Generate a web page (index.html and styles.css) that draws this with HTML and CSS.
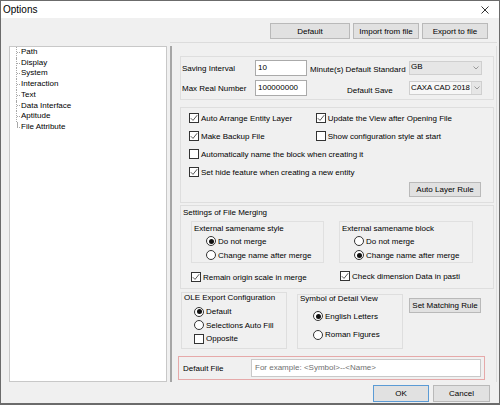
FILE: index.html
```html
<!DOCTYPE html>
<html lang="en">
<head>
    <meta charset="UTF-8">
    <title>Options</title>
    <link rel="stylesheet" href="styles.css">
</head>
<body>

    <div class="window">
        <div class="titlebar">
            <span class="title">Options</span>
            <svg class="close" width="8" height="8" viewBox="0 0 8 8">
                <path d="M0.5 0.5 L7.5 7.5 M7.5 0.5 L0.5 7.5" stroke="#333" stroke-width="1" fill="none"/>
            </svg>
        </div>

        <div class="content">
            <div class="toolbar">
                <button class="btn btn-default">Default</button>
                <button class="btn btn-import">Import from file</button>
                <button class="btn btn-export">Export to file</button>
            </div>
            <div class="separator"></div>

            <div class="main">
                <ul class="tree">
                    <li>Path</li>
                    <li>Display</li>
                    <li>System</li>
                    <li>Interaction</li>
                    <li>Text</li>
                    <li>Data Interface</li>
                    <li>Aptitude</li>
                    <li class="last">File Attribute</li>
                </ul>

                <div class="page">
                    <!-- basic values -->
                    <div class="group basic">
                        <span class="lbl">Saving Interval</span>
                        <span class="field">10</span>
                        <span class="mid mid-1">Minute(s) Default Standard</span>
                        <span class="select select-gb"><span class="sel-text">GB</span><span class="chev"></span></span>

                        <span class="lbl">Max Real Number</span>
                        <span class="field">100000000</span>
                        <span class="mid mid-2">Default Save</span>
                        <span class="select select-save"><span class="sel-text">CAXA CAD 2018</span><span class="chev"></span></span>
                    </div>

                    <!-- checkbox options -->
                    <div class="group checks">
                        <div class="check-grid">
                            <label class="opt"><span class="cb on"></span>Auto Arrange Entity Layer</label>
                            <label class="opt"><span class="cb on"></span>Update the View after Opening File</label>
                            <label class="opt"><span class="cb on"></span>Make Backup File</label>
                            <label class="opt"><span class="cb"></span>Show configuration style at start</label>
                            <label class="opt wide"><span class="cb"></span>Automatically name the block when creating it</label>
                            <label class="opt wide"><span class="cb on"></span>Set hide feature when creating a new entity</label>
                        </div>
                        <div class="btn-row">
                            <button class="btn btn-small">Auto Layer Rule</button>
                        </div>
                    </div>

                    <!-- file merging -->
                    <div class="group merge">
                        <div class="group-title">Settings of File Merging</div>
                        <div class="sub-row">
                            <div class="subbox">
                                <div class="sub-title">External samename style</div>
                                <label class="opt radio-opt"><span class="rb on"></span>Do not merge</label>
                                <label class="opt radio-opt"><span class="rb"></span>Change name after merge</label>
                            </div>
                            <div class="subbox subbox-2">
                                <div class="sub-title">External samename block</div>
                                <label class="opt radio-opt"><span class="rb"></span>Do not merge</label>
                                <label class="opt radio-opt"><span class="rb on"></span>Change name after merge</label>
                            </div>
                        </div>
                        <div class="merge-checks">
                            <label class="opt merge-left"><span class="cb on"></span>Remain origin scale in merge</label>
                            <label class="opt merge-right"><span class="cb on"></span>Check dimension Data in pasti</label>
                        </div>
                    </div>

                    <!-- export / detail view -->
                    <div class="lower">
                        <div class="box ole">
                            <div class="box-title">OLE Export Configuration</div>
                            <label class="opt ole-opt"><span class="rb on"></span>Default</label>
                            <label class="opt ole-opt"><span class="rb"></span>Selections Auto Fill</label>
                            <label class="opt ole-opt"><span class="cb"></span>Opposite</label>
                        </div>
                        <div class="box symbol">
                            <div class="box-title">Symbol of Detail View</div>
                            <label class="opt sym-opt"><span class="rb on"></span>English Letters</label>
                            <label class="opt sym-opt"><span class="rb"></span>Roman Figures</label>
                        </div>
                        <button class="btn btn-small btn-match">Set Matching Rule</button>
                    </div>

                    <div class="default-file">
                        <span class="df-label">Default File</span>
                        <span class="df-input">For example: &lt;Symbol&gt;--&lt;Name&gt;</span>
                    </div>
                </div>
            </div>

            <div class="footer">
                <button class="btn btn-ok">OK</button>
                <button class="btn btn-cancel">Cancel</button>
            </div>
        </div>
    </div>

</body>
</html>
```

FILE: styles.css
```css
* {
    box-sizing: border-box;
}

body {
    margin: 0;
    font-family: "Liberation Sans", Arial, sans-serif;
    font-size: 8px;
    color: #000;
    background: #fff;
}

.window {
    width: 500px;
    height: 405px;
    border: 1px solid #6b6b6b;
    border-bottom-width: 2px;
    background: #f0f0f0;
    display: flex;
    flex-direction: column;
}

.titlebar {
    height: 17px;
    flex: none;
    background: #fff;
    display: flex;
    align-items: center;
    justify-content: space-between;
    padding: 0 10px 0 2px;
}

.title {
    font-size: 10px;
}

.content {
    flex: 1;
    display: flex;
    flex-direction: column;
    padding: 5px 2px 0 8px;
}

/* buttons */
.btn {
    font-family: inherit;
    font-size: 8px;
    color: #000;
    background: #e1e1e1;
    border: 1px solid #b9b9b9;
    padding: 0;
    margin: 0;
    border-radius: 0;
}

.toolbar {
    display: flex;
    justify-content: flex-end;
    gap: 3px;
    height: 16px;
    padding-right: 9px;
}

.btn-default {
    width: 80px;
}

.btn-import,
.btn-export {
    width: 66px;
}

.separator {
    height: 1px;
    margin: 3px 0 0 161px;
    background: #dcdcdc;
}

.main {
    display: flex;
    gap: 3px;
    margin-top: 3px;
    height: 336px;
}

/* left tree */
.tree {
    width: 158px;
    flex: none;
    margin: 0;
    padding: 0 0 0 6px;
    list-style: none;
    background: #fff;
    border: 1px solid #c8c8c8;
    line-height: 10.7px;
}

.tree li {
    display: flex;
    align-items: center;
    border-left: 1px dotted #a8a8a8;
    padding-left: 0;
}

.tree li::before {
    content: '';
    width: 3px;
    margin-right: 1px;
    border-top: 1px dotted #a8a8a8;
}

.tree li.last {
    border-left-color: transparent;
    background: linear-gradient(#a8a8a8, #a8a8a8) 0 0 / 1px 50% no-repeat;
}

/* right page */
.page {
    flex: 1;
    border-left: 2px solid #a6a6a6;
    border-right: 1px solid #dedede;
    padding: 10px 0 0 8px;
}

.group {
    width: 314px;
    border: 1px solid #dedede;
}

.basic {
    display: grid;
    grid-template-columns: 73px 52px 102px 73px;
    grid-auto-rows: 16px;
    row-gap: 4px;
    padding: 3px 0 3px 1px;
    align-items: center;
}

.field {
    height: 16px;
    line-height: 14px;
    background: #fff;
    border: 1px solid #aaa;
    padding-left: 2px;
}

.mid-1 {
    padding: 2px 0 0 3px;
}

.mid-2 {
    padding: 4px 0 0 40px;
}

.select {
    height: 14px;
    display: flex;
    border: 1px solid #cfcfcf;
    background: #e6e6e6;
}

.sel-text {
    flex: 1;
    padding-left: 1px;
    white-space: nowrap;
}

.select-gb .sel-text {
    line-height: 9px;
}

.select-save .sel-text {
    line-height: 12px;
    background: #f7f7f7;
    font-size: 7.8px;
}

.chev {
    width: 10px;
    flex: none;
    background: url("data:image/svg+xml,%3Csvg xmlns='http://www.w3.org/2000/svg' width='6' height='4'%3E%3Cpath d='M0.5 0.5 L3 3 L5.5 0.5' stroke='%23999' fill='none'/%3E%3C/svg%3E") center no-repeat;
}

.select-save .chev {
    border-left: 1px solid #d8d8d8;
}

/* check / radio marks */
.opt {
    display: flex;
    align-items: center;
    white-space: nowrap;
}

.cb,
.rb {
    width: 10px;
    height: 10px;
    flex: none;
    margin-right: 2px;
    border: 1px solid #333;
    background: #fff;
}

.cb.on {
    background: #fff url("data:image/svg+xml,%3Csvg xmlns='http://www.w3.org/2000/svg' width='8' height='8'%3E%3Cpath d='M0.8 4.2 L3 6.4 L7.2 1.2' stroke='%23444' stroke-width='0.9' fill='none'/%3E%3C/svg%3E") center no-repeat;
}

.rb {
    border-radius: 50%;
    display: flex;
    align-items: center;
    justify-content: center;
}

.rb.on::after {
    content: '';
    width: 5px;
    height: 5px;
    border-radius: 50%;
    background: #111;
}

.checks {
    margin-top: 7px;
    padding: 1px 12px 5px 8px;
}

.check-grid {
    display: grid;
    grid-template-columns: 126.7px auto;
    grid-auto-rows: 18px;
}

.check-grid .wide {
    grid-column: span 2;
}

.btn-row {
    display: flex;
    justify-content: flex-end;
    margin-top: 1px;
}

.btn-small {
    width: 72px;
    height: 15px;
}

/* file merging */
.merge {
    margin-top: 2px;
    padding: 1px 0 4px 10px;
}

.group-title {
    line-height: 12px;
    margin-left: -8px;
}

.sub-row {
    display: flex;
    gap: 15px;
    margin-top: 2px;
}

.subbox {
    width: 133px;
    height: 42px;
    border: 1px solid #e0e0e0;
    padding: 1px 0 0 2px;
}

.subbox-2 {
    width: 134px;
}

.sub-title {
    line-height: 11px;
}

.radio-opt {
    height: 14px;
    padding-left: 12px;
}

.merge-checks {
    display: flex;
    margin-top: 7px;
    height: 14px;
    align-items: center;
}

.merge-left {
    width: 149px;
}

.merge-right {
    margin-top: -2px;
}

/* lower boxes */
.lower {
    display: flex;
    align-items: flex-start;
    margin-top: 3px;
}

.box {
    width: 106px;
    border: 1px solid #dedede;
}

.ole {
    height: 57px;
    margin-left: 1px;
    padding-left: 2px;
}

.symbol {
    height: 55px;
    margin: 2px 0 0 10px;
    padding-left: 2px;
}

.box-title {
    line-height: 10px;
}

.ole-opt {
    height: 13.5px;
    padding-left: 10px;
}

.ole-opt:first-of-type {
    margin-top: 2px;
}

.symbol .box-title {
    margin-top: -1px;
}

.sym-opt {
    height: 18.5px;
    padding-left: 13px;
}

.symbol .box-title + .sym-opt {
    margin-top: 3px;
}

.btn-match {
    margin: 6px 0 0 6px;
}

/* default file */
.default-file {
    display: flex;
    align-items: center;
    width: 307px;
    height: 24px;
    margin: 7px 0 0 -2px;
    padding-left: 4px;
    border: 1px solid #e6a9a9;
}

.df-label {
    width: 68px;
}

.df-input {
    width: 230px;
    height: 18px;
    line-height: 16px;
    padding-left: 3px;
    background: #fff;
    border: 1px solid #c9c9c9;
    color: #707070;
}

/* footer */
.footer {
    display: flex;
    justify-content: flex-end;
    gap: 4px;
    margin-top: 3px;
    padding-right: 7px;
}

.btn-ok {
    width: 56px;
    height: 17px;
    border-color: #5b9bd5;
}

.btn-cancel {
    width: 57px;
    height: 17px;
}
```
